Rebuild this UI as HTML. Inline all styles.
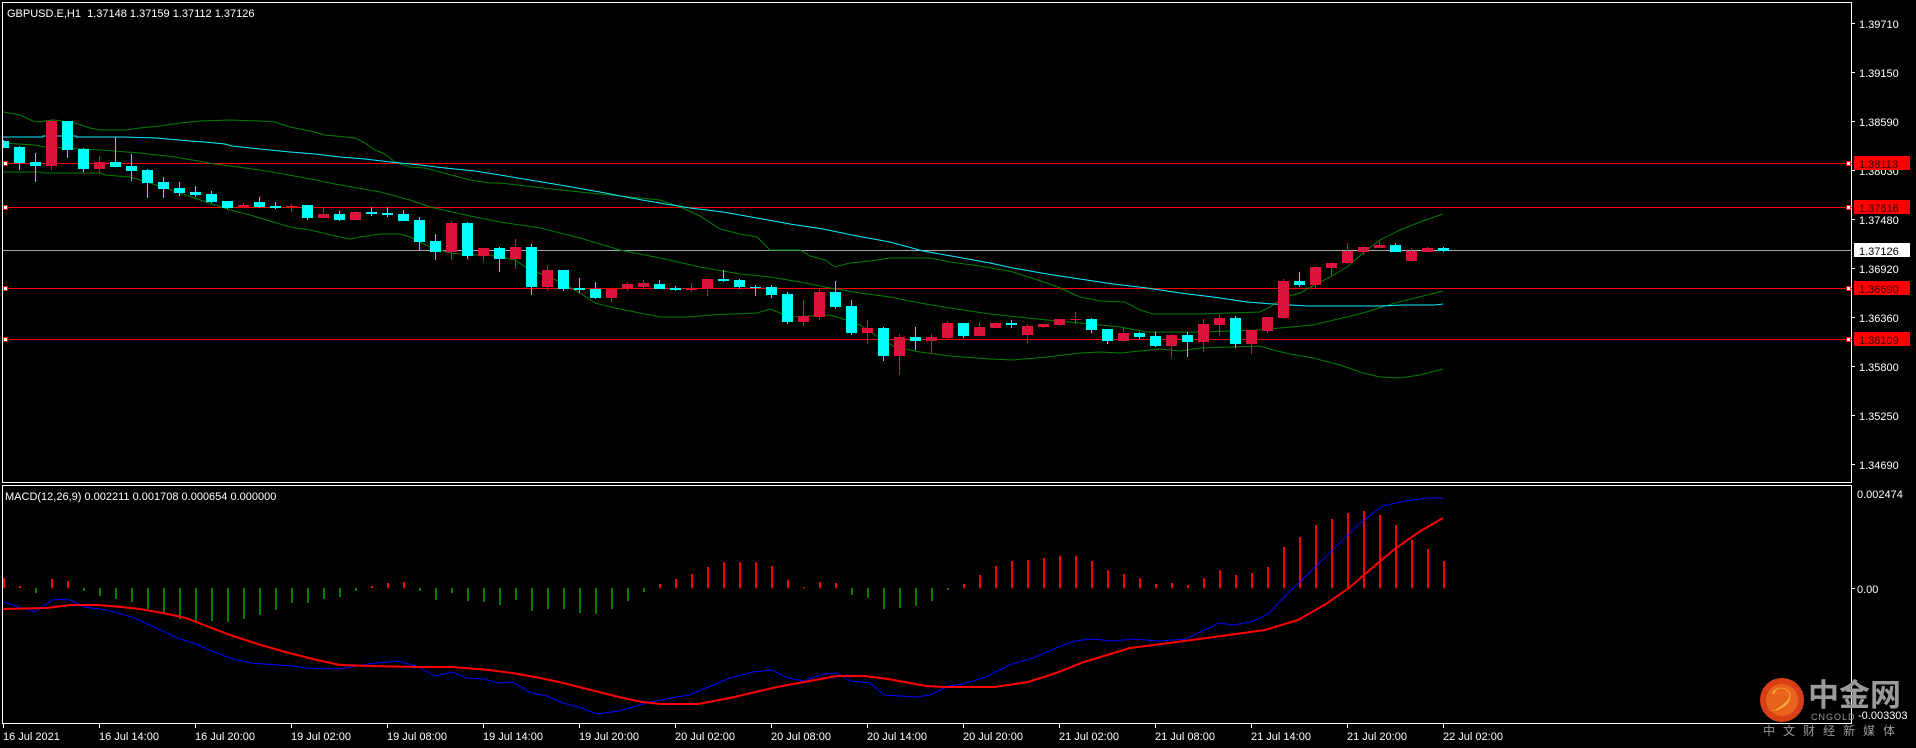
<!DOCTYPE html>
<html><head><meta charset="utf-8"><style>
html,body{margin:0;padding:0;background:#000;width:1916px;height:748px;overflow:hidden}
svg{display:block}
text{font-family:"Liberation Sans","Noto Sans CJK SC",sans-serif;font-size:11px}
</style></head><body>
<svg width="1916" height="748" viewBox="0 0 1916 748" xmlns="http://www.w3.org/2000/svg">
<rect width="1916" height="748" fill="#000"/>
<defs><clipPath id="cm"><rect x="3" y="3" width="1849" height="480"/></clipPath>
<clipPath id="cd"><rect x="3" y="486" width="1849" height="238"/></clipPath></defs>

<!-- frames -->
<rect x="2.5" y="2.5" width="1849" height="480" fill="none" stroke="#fff"/>
<rect x="2.5" y="485.5" width="1849" height="238" fill="none" stroke="#fff"/>

<text x="7" y="17" fill="#fff">GBPUSD.E,H1&#160;&#160;1.37148 1.37159 1.37112 1.37126</text>
<text x="5" y="500" fill="#fff">MACD(12,26,9) 0.002211 0.001708 0.000654 0.000000</text>

<g clip-path="url(#cm)">
<!-- horizontal lines -->
<rect x="3" y="163" width="1849" height="1" fill="#ff0000"/>
<rect x="3" y="207" width="1849" height="1" fill="#ff0000"/>
<rect x="3" y="250" width="1849" height="1" fill="#a0a8b4"/>
<rect x="3" y="288" width="1849" height="1" fill="#ff0000"/>
<rect x="3" y="339" width="1849" height="1" fill="#ff0000"/>

<g fill="none" stroke-width="1">
<polyline stroke="#008000" points="3,112 20,115 35,122 45,121 55,120 75,123 90,128 100,130 125,130 140,128 160,126 180,123 200,121 230,120 260,121 275,122 290,127 310,131 325,135 345,137 355,138 365,143 375,150 385,154 395,162 410,167 425,168 440,172 455,176 470,180 490,183 500,183 560,190 620,196 660,200 680,207 700,216 720,229 740,234 757,237 770,250 800,250 810,256 825,260 835,267 850,263 870,261 890,258 930,258 950,262 980,266 1013,272 1047,283 1060,288 1080,297 1100,301 1125,302 1140,310 1153,314 1200,314 1230,313 1260,312 1270,307 1285,297 1300,293 1313,286 1330,277 1347,267 1363,253 1380,240 1400,230 1420,222 1443,214"/>
<polyline stroke="#008000" points="3,143 35,145 45,147 100,150 140,153 175,157 215,164 260,170 300,177 335,184 380,192 410,200 430,207 470,216 500,222 540,228 580,238 620,250 660,258 700,267 740,274 770,277 800,282 830,288 860,293 890,297 920,303 950,308 990,314 1047,320 1080,323 1120,327 1147,332 1200,332 1260,330 1280,328 1313,325 1363,313 1395,303 1443,291"/>
<polyline stroke="#008000" points="3,172 40,172 45,173 100,173 105,175 130,177 140,180 150,183 165,188 180,193 200,200 215,205 230,210 250,215 270,221 290,227 310,230 340,237 350,239 360,237 380,234 400,234 410,237 420,242 430,247 450,253 470,255 490,255 515,260 530,270 545,275 560,282 580,293 595,303 615,308 640,313 660,317 690,317 710,315 757,313 770,309 780,313 790,317 830,315 840,318 860,325 875,335 895,347 920,352 950,356 990,359 1013,360 1047,357 1080,353 1100,352 1120,353 1140,351 1160,349 1180,351 1200,348 1260,346 1273,350 1290,354 1313,358 1340,365 1363,373 1380,377 1400,378 1420,375 1443,369"/>
<polyline stroke="#00f0ff" points="3,137 43,137 43,136 76,136 76,137 124,137 156,138 168,139 190,141 205,142 215,143 225,144 232,146 250,148 270,150 290,152 315,154 340,157 365,159 390,162 420,165 445,168 475,171 500,175 560,185 600,192 642,200 690,208 723,212 757,218 790,224 823,229 857,236 890,242 923,251 957,257 990,263 1013,268 1047,274 1080,279 1113,284 1147,288 1180,293 1213,297 1247,302 1273,304 1308,306 1380,306 1403,305 1435,305 1443,304"/>
</g>

<!-- candles -->
<g id="c">
<g fill="#00ffff">
<rect x="3" y="140" width="1" height="8"/><rect x="-2" y="141" width="11" height="7"/>
<rect x="19" y="146" width="1" height="24"/><rect x="14" y="147" width="11" height="16"/>
<rect x="35" y="153" width="1" height="29"/><rect x="30" y="162" width="11" height="4"/>
<rect x="67" y="121" width="1" height="37"/><rect x="62" y="121" width="11" height="29"/>
<rect x="83" y="148" width="1" height="24"/><rect x="78" y="149" width="11" height="20"/>
<rect x="115" y="137" width="1" height="30"/><rect x="110" y="162" width="11" height="5"/>
<rect x="131" y="154" width="1" height="27"/><rect x="126" y="166" width="11" height="5"/>
<rect x="147" y="169" width="1" height="29"/><rect x="142" y="170" width="11" height="13"/>
<rect x="163" y="177" width="1" height="21"/><rect x="158" y="182" width="11" height="7"/>
<rect x="179" y="182" width="1" height="14"/><rect x="174" y="188" width="11" height="5"/>
<rect x="195" y="186" width="1" height="11"/><rect x="190" y="192" width="11" height="3"/>
<rect x="211" y="191" width="1" height="12"/><rect x="206" y="194" width="11" height="8"/>
<rect x="227" y="201" width="1" height="8"/><rect x="222" y="201" width="11" height="7"/>
<rect x="259" y="197" width="1" height="11"/><rect x="254" y="202" width="11" height="5"/>
<rect x="275" y="202" width="1" height="7"/><rect x="270" y="206" width="11" height="2"/>
<rect x="307" y="205" width="1" height="15"/><rect x="302" y="205" width="11" height="13"/>
<rect x="339" y="211" width="1" height="10"/><rect x="334" y="214" width="11" height="6"/>
<rect x="371" y="207" width="1" height="9"/><rect x="366" y="212" width="11" height="2"/>
<rect x="387" y="207" width="1" height="10"/><rect x="382" y="213" width="11" height="2"/>
<rect x="403" y="210" width="1" height="11"/><rect x="398" y="214" width="11" height="7"/>
<rect x="419" y="217" width="1" height="33"/><rect x="414" y="220" width="11" height="22"/>
<rect x="435" y="234" width="1" height="26"/><rect x="430" y="241" width="11" height="11"/>
<rect x="467" y="222" width="1" height="37"/><rect x="462" y="223" width="11" height="33"/>
<rect x="499" y="247" width="1" height="25"/><rect x="494" y="248" width="11" height="11"/>
<rect x="531" y="244" width="1" height="51"/><rect x="526" y="247" width="11" height="40"/>
<rect x="563" y="270" width="1" height="21"/><rect x="558" y="270" width="11" height="19"/>
<rect x="579" y="278" width="1" height="15"/><rect x="574" y="288" width="11" height="2"/>
<rect x="595" y="282" width="1" height="17"/><rect x="590" y="289" width="11" height="9"/>
<rect x="659" y="280" width="1" height="9"/><rect x="654" y="284" width="11" height="5"/>
<rect x="675" y="286" width="1" height="5"/><rect x="670" y="288" width="11" height="2"/>
<rect x="723" y="270" width="1" height="12"/><rect x="718" y="279" width="11" height="2"/>
<rect x="739" y="279" width="1" height="10"/><rect x="734" y="280" width="11" height="7"/>
<rect x="755" y="285" width="1" height="11"/><rect x="750" y="287" width="11" height="1"/>
<rect x="771" y="285" width="1" height="13"/><rect x="766" y="287" width="11" height="8"/>
<rect x="787" y="292" width="1" height="32"/><rect x="782" y="294" width="11" height="28"/>
<rect x="835" y="281" width="1" height="28"/><rect x="830" y="292" width="11" height="15"/>
<rect x="851" y="300" width="1" height="35"/><rect x="846" y="306" width="11" height="27"/>
<rect x="883" y="327" width="1" height="34"/><rect x="878" y="328" width="11" height="28"/>
<rect x="915" y="327" width="1" height="23"/><rect x="910" y="337" width="11" height="4"/>
<rect x="963" y="323" width="1" height="15"/><rect x="958" y="323" width="11" height="13"/>
<rect x="1011" y="320" width="1" height="8"/><rect x="1006" y="323" width="11" height="2"/>
<rect x="1091" y="318" width="1" height="15"/><rect x="1086" y="319" width="11" height="11"/>
<rect x="1107" y="329" width="1" height="15"/><rect x="1102" y="329" width="11" height="12"/>
<rect x="1139" y="332" width="1" height="7"/><rect x="1134" y="333" width="11" height="4"/>
<rect x="1155" y="332" width="1" height="15"/><rect x="1150" y="336" width="11" height="10"/>
<rect x="1187" y="332" width="1" height="25"/><rect x="1182" y="335" width="11" height="7"/>
<rect x="1235" y="316" width="1" height="32"/><rect x="1230" y="318" width="11" height="26"/>
<rect x="1299" y="272" width="1" height="15"/><rect x="1294" y="281" width="11" height="4"/>
<rect x="1395" y="243" width="1" height="9"/><rect x="1390" y="245" width="11" height="7"/>
<rect x="1443" y="247" width="1" height="5"/><rect x="1438" y="248" width="11" height="3"/>
</g>
<g fill="#dc143c">
<rect x="51" y="119" width="1" height="51"/><rect x="46" y="121" width="11" height="45"/>
<rect x="99" y="156" width="1" height="17"/><rect x="94" y="162" width="11" height="7"/>
<rect x="243" y="203" width="1" height="4"/><rect x="238" y="205" width="11" height="2"/>
<rect x="291" y="204" width="1" height="8"/><rect x="286" y="206" width="11" height="1"/>
<rect x="323" y="207" width="1" height="11"/><rect x="318" y="214" width="11" height="4"/>
<rect x="355" y="211" width="1" height="9"/><rect x="350" y="212" width="11" height="8"/>
<rect x="451" y="221" width="1" height="39"/><rect x="446" y="223" width="11" height="29"/>
<rect x="483" y="248" width="1" height="14"/><rect x="478" y="248" width="11" height="8"/>
<rect x="515" y="239" width="1" height="30"/><rect x="510" y="247" width="11" height="12"/>
<rect x="547" y="265" width="1" height="26"/><rect x="542" y="270" width="11" height="17"/>
<rect x="611" y="289" width="1" height="13"/><rect x="606" y="289" width="11" height="9"/>
<rect x="627" y="282" width="1" height="9"/><rect x="622" y="284" width="11" height="4"/>
<rect x="643" y="280" width="1" height="8"/><rect x="638" y="283" width="11" height="4"/>
<rect x="691" y="283" width="1" height="9"/><rect x="686" y="288" width="11" height="2"/>
<rect x="707" y="279" width="1" height="17"/><rect x="702" y="279" width="11" height="10"/>
<rect x="803" y="300" width="1" height="26"/><rect x="798" y="316" width="11" height="6"/>
<rect x="819" y="288" width="1" height="32"/><rect x="814" y="292" width="11" height="25"/>
<rect x="867" y="320" width="1" height="24"/><rect x="862" y="328" width="11" height="5"/>
<rect x="899" y="334" width="1" height="41"/><rect x="894" y="337" width="11" height="19"/>
<rect x="931" y="334" width="1" height="20"/><rect x="926" y="337" width="11" height="4"/>
<rect x="947" y="321" width="1" height="18"/><rect x="942" y="323" width="11" height="15"/>
<rect x="979" y="323" width="1" height="13"/><rect x="974" y="327" width="11" height="9"/>
<rect x="995" y="322" width="1" height="6"/><rect x="990" y="323" width="11" height="5"/>
<rect x="1027" y="324" width="1" height="19"/><rect x="1022" y="326" width="11" height="9"/>
<rect x="1043" y="324" width="1" height="4"/><rect x="1038" y="324" width="11" height="3"/>
<rect x="1059" y="319" width="1" height="7"/><rect x="1054" y="319" width="11" height="6"/>
<rect x="1075" y="312" width="1" height="12"/><rect x="1070" y="319" width="11" height="1"/>
<rect x="1123" y="328" width="1" height="14"/><rect x="1118" y="333" width="11" height="8"/>
<rect x="1171" y="334" width="1" height="24"/><rect x="1166" y="335" width="11" height="11"/>
<rect x="1203" y="319" width="1" height="33"/><rect x="1198" y="324" width="11" height="18"/>
<rect x="1219" y="315" width="1" height="21"/><rect x="1214" y="318" width="11" height="7"/>
<rect x="1251" y="330" width="1" height="24"/><rect x="1246" y="330" width="11" height="14"/>
<rect x="1267" y="317" width="1" height="16"/><rect x="1262" y="317" width="11" height="14"/>
<rect x="1283" y="279" width="1" height="40"/><rect x="1278" y="281" width="11" height="37"/>
<rect x="1315" y="266" width="1" height="22"/><rect x="1310" y="267" width="11" height="18"/>
<rect x="1331" y="262" width="1" height="14"/><rect x="1326" y="263" width="11" height="5"/>
<rect x="1347" y="243" width="1" height="21"/><rect x="1342" y="251" width="11" height="12"/>
<rect x="1363" y="246" width="1" height="9"/><rect x="1358" y="247" width="11" height="5"/>
<rect x="1379" y="241" width="1" height="7"/><rect x="1374" y="245" width="11" height="3"/>
<rect x="1411" y="248" width="1" height="13"/><rect x="1406" y="251" width="11" height="10"/>
<rect x="1427" y="247" width="1" height="5"/><rect x="1422" y="248" width="11" height="4"/>
</g>
</g>
</g>

<!-- line end markers -->
<g fill="#fff" stroke="#ff0000" stroke-width="1">
<rect x="3.5" y="161.5" width="4" height="4"/><rect x="3.5" y="205.5" width="4" height="4"/>
<rect x="3.5" y="286.5" width="4" height="4"/><rect x="3.5" y="337.5" width="4" height="4"/>
<rect x="1846.5" y="161.5" width="4" height="4"/><rect x="1846.5" y="205.5" width="4" height="4"/>
<rect x="1846.5" y="286.5" width="4" height="4"/><rect x="1846.5" y="337.5" width="4" height="4"/>
</g>

<!-- MACD -->
<g clip-path="url(#cd)">
<g fill="#ff0000">
<rect x="3" y="578" width="2" height="10"/><rect x="19" y="586" width="2" height="2"/><rect x="51" y="579" width="2" height="9"/><rect x="67" y="581" width="2" height="7"/>
<rect x="371" y="586" width="2" height="2"/><rect x="387" y="583" width="2" height="5"/><rect x="403" y="582" width="2" height="6"/>
<rect x="659" y="584" width="2" height="4"/><rect x="675" y="579" width="2" height="9"/><rect x="691" y="574" width="2" height="14"/><rect x="707" y="567" width="2" height="21"/><rect x="723" y="562" width="2" height="26"/>
<rect x="739" y="562" width="2" height="26"/><rect x="755" y="562" width="2" height="26"/><rect x="771" y="566" width="2" height="22"/><rect x="787" y="580" width="2" height="8"/><rect x="803" y="587" width="2" height="1"/><rect x="819" y="582" width="2" height="6"/><rect x="835" y="583" width="2" height="5"/>
<rect x="963" y="584" width="2" height="4"/><rect x="979" y="575" width="2" height="13"/><rect x="995" y="566" width="2" height="22"/><rect x="1011" y="561" width="2" height="27"/><rect x="1027" y="560" width="2" height="28"/><rect x="1043" y="558" width="2" height="30"/><rect x="1059" y="556" width="2" height="32"/><rect x="1075" y="556" width="2" height="32"/><rect x="1091" y="561" width="2" height="27"/><rect x="1107" y="570" width="2" height="18"/><rect x="1123" y="574" width="2" height="14"/><rect x="1139" y="578" width="2" height="10"/><rect x="1155" y="584" width="2" height="4"/><rect x="1171" y="583" width="2" height="5"/><rect x="1187" y="585" width="2" height="3"/><rect x="1203" y="578" width="2" height="10"/><rect x="1219" y="570" width="2" height="18"/><rect x="1235" y="575" width="2" height="13"/><rect x="1251" y="573" width="2" height="15"/><rect x="1267" y="567" width="2" height="21"/><rect x="1283" y="547" width="2" height="41"/><rect x="1299" y="537" width="2" height="51"/><rect x="1315" y="525" width="2" height="63"/><rect x="1331" y="519" width="2" height="69"/><rect x="1347" y="513" width="2" height="75"/><rect x="1363" y="511" width="2" height="77"/><rect x="1379" y="515" width="2" height="73"/><rect x="1395" y="525" width="2" height="63"/><rect x="1411" y="540" width="2" height="48"/><rect x="1427" y="549" width="2" height="39"/><rect x="1443" y="561" width="2" height="27"/>
</g>
<g fill="#008000">
<rect x="35" y="588" width="2" height="5"/><rect x="83" y="588" width="2" height="3"/><rect x="99" y="588" width="2" height="8"/><rect x="115" y="588" width="2" height="11"/><rect x="131" y="588" width="2" height="14"/><rect x="147" y="588" width="2" height="21"/><rect x="163" y="588" width="2" height="24"/><rect x="179" y="588" width="2" height="31"/><rect x="195" y="588" width="2" height="33"/><rect x="211" y="588" width="2" height="33"/><rect x="227" y="588" width="2" height="34"/><rect x="243" y="588" width="2" height="31"/><rect x="259" y="588" width="2" height="27"/><rect x="275" y="588" width="2" height="22"/><rect x="291" y="588" width="2" height="15"/><rect x="307" y="588" width="2" height="15"/><rect x="323" y="588" width="2" height="11"/><rect x="339" y="588" width="2" height="9"/><rect x="355" y="588" width="2" height="3"/>
<rect x="419" y="588" width="2" height="3"/><rect x="435" y="588" width="2" height="12"/><rect x="451" y="588" width="2" height="5"/><rect x="467" y="588" width="2" height="13"/><rect x="483" y="588" width="2" height="14"/><rect x="499" y="588" width="2" height="17"/><rect x="515" y="588" width="2" height="12"/><rect x="531" y="588" width="2" height="23"/><rect x="547" y="588" width="2" height="21"/><rect x="563" y="588" width="2" height="21"/><rect x="579" y="588" width="2" height="25"/><rect x="595" y="588" width="2" height="26"/><rect x="611" y="588" width="2" height="21"/><rect x="627" y="588" width="2" height="13"/><rect x="643" y="588" width="2" height="4"/>
<rect x="851" y="588" width="2" height="7"/><rect x="867" y="588" width="2" height="10"/><rect x="883" y="588" width="2" height="21"/><rect x="899" y="588" width="2" height="20"/><rect x="915" y="588" width="2" height="18"/><rect x="931" y="588" width="2" height="13"/><rect x="947" y="588" width="2" height="2"/>
</g>
<g fill="none">
<polyline stroke="#0000ff" stroke-width="1" points="3,602 35,612 54,599 70,600 84,607 107,610 135,618 154,627 177,638 196,644 214,652 233,659 251,663 293,666 307,668 340,669 368,664 398,661 419,667 435,676 452,672 466,678 484,679 498,683 512,682 531,693 547,696 563,703 582,708 596,714 619,711 647,703 670,698 689,695 708,687 730,678 753,672 772,670 788,678 804,681 823,674 837,673 851,681 870,683 884,695 916,697 930,695 949,686 963,684 986,677 1009,665 1033,658 1056,648 1074,641 1093,639 1112,641 1135,639 1158,641 1186,639 1219,623 1233,625 1251,622 1268,614 1289,592 1307,575 1335,548 1358,525 1382,506 1405,501 1428,498 1443,498"/>
<polyline stroke="#ff0000" stroke-width="2" points="3,609 47,608 70,605 98,605 121,607 140,609 163,613 186,618 209,627 233,636 261,645 289,653 317,660 340,665 372,666 419,667 452,667 489,670 512,673 535,677 559,682 587,689 619,697 642,702 661,704 698,704 730,698 777,687 837,676 865,676 888,679 926,686 944,687 995,687 1028,682 1056,673 1084,662 1130,648 1177,642 1214,637 1265,630 1298,620 1326,604 1349,588 1372,568 1396,548 1419,532 1443,518"/>
</g>
</g>

<!-- right axis -->
<g fill="#fff">
<rect x="1852" y="23" width="3" height="1"/><rect x="1852" y="72" width="3" height="1"/><rect x="1852" y="121" width="3" height="1"/><rect x="1852" y="170" width="3" height="1"/><rect x="1852" y="219" width="3" height="1"/><rect x="1852" y="268" width="3" height="1"/><rect x="1852" y="317" width="3" height="1"/><rect x="1852" y="366" width="3" height="1"/><rect x="1852" y="415" width="3" height="1"/><rect x="1852" y="464" width="3" height="1"/><rect x="1852" y="588" width="3" height="1"/>
<text x="1859" y="28">1.39710</text>
<text x="1859" y="77">1.39150</text>
<text x="1859" y="126">1.38590</text>
<text x="1859" y="175">1.38030</text>
<text x="1859" y="224">1.37480</text>
<text x="1859" y="273">1.36920</text>
<text x="1859" y="322">1.36360</text>
<text x="1859" y="371">1.35800</text>
<text x="1859" y="420">1.35250</text>
<text x="1859" y="469">1.34690</text>
<text x="1857" y="498">0.002474</text>
<text x="1857" y="593">0.00</text>
</g>
<rect x="1854" y="156" width="56" height="14" fill="#ff0000"/>
<rect x="1854" y="200" width="56" height="14" fill="#ff0000"/>
<rect x="1854" y="243" width="56" height="14" fill="#fff"/>
<rect x="1854" y="281" width="56" height="14" fill="#ff0000"/>
<rect x="1854" y="332" width="56" height="14" fill="#ff0000"/>
<g fill="#300000">
<text x="1859" y="168">1.38113</text>
<text x="1859" y="212">1.37616</text>
<text x="1859" y="293" >1.36690</text>
<text x="1859" y="344">1.36109</text>
</g>
<text x="1859" y="255" fill="#000">1.37126</text>

<!-- time axis -->
<g fill="#fff">
<rect x="3" y="724" width="1" height="4"/><rect x="99" y="724" width="1" height="4"/><rect x="195" y="724" width="1" height="4"/><rect x="291" y="724" width="1" height="4"/><rect x="387" y="724" width="1" height="4"/><rect x="483" y="724" width="1" height="4"/><rect x="579" y="724" width="1" height="4"/><rect x="675" y="724" width="1" height="4"/><rect x="771" y="724" width="1" height="4"/><rect x="867" y="724" width="1" height="4"/><rect x="963" y="724" width="1" height="4"/><rect x="1059" y="724" width="1" height="4"/><rect x="1155" y="724" width="1" height="4"/><rect x="1251" y="724" width="1" height="4"/><rect x="1347" y="724" width="1" height="4"/><rect x="1443" y="724" width="1" height="4"/>
<text x="3" y="740">16 Jul 2021</text>
<text x="99" y="740">16 Jul 14:00</text>
<text x="195" y="740">16 Jul 20:00</text>
<text x="291" y="740">19 Jul 02:00</text>
<text x="387" y="740">19 Jul 08:00</text>
<text x="483" y="740">19 Jul 14:00</text>
<text x="579" y="740">19 Jul 20:00</text>
<text x="675" y="740">20 Jul 02:00</text>
<text x="771" y="740">20 Jul 08:00</text>
<text x="867" y="740">20 Jul 14:00</text>
<text x="963" y="740">20 Jul 20:00</text>
<text x="1059" y="740">21 Jul 02:00</text>
<text x="1155" y="740">21 Jul 08:00</text>
<text x="1251" y="740">21 Jul 14:00</text>
<text x="1347" y="740">21 Jul 20:00</text>
<text x="1443" y="740">22 Jul 02:00</text>
</g>

<!-- watermark -->
<circle cx="1782" cy="700" r="22" fill="#d9401a"/>
<circle cx="1782" cy="700" r="16" fill="#e8641c"/>
<path d="M1774 694 q4 -9 12 -4 q7 5 0 12 q-6 6 -14 9 q10 -1 16 -8 q6 -9 -2 -14 q-10 -4 -14 5 z" fill="#f5b13a"/>
<text x="1808" y="706" fill="#9a9a9a" style="font-size:31px;font-weight:bold">中金网</text>
<text x="1811" y="720" fill="#9a9a9a" style="font-size:9px;letter-spacing:1px">CNGOLD</text>
<text x="1858" y="719" fill="#fff">-0.003303</text>
<text x="1763" y="735" fill="#9a9a9a" style="font-size:12px;letter-spacing:8px">中文财经新媒体</text>
</svg>
</body></html>
